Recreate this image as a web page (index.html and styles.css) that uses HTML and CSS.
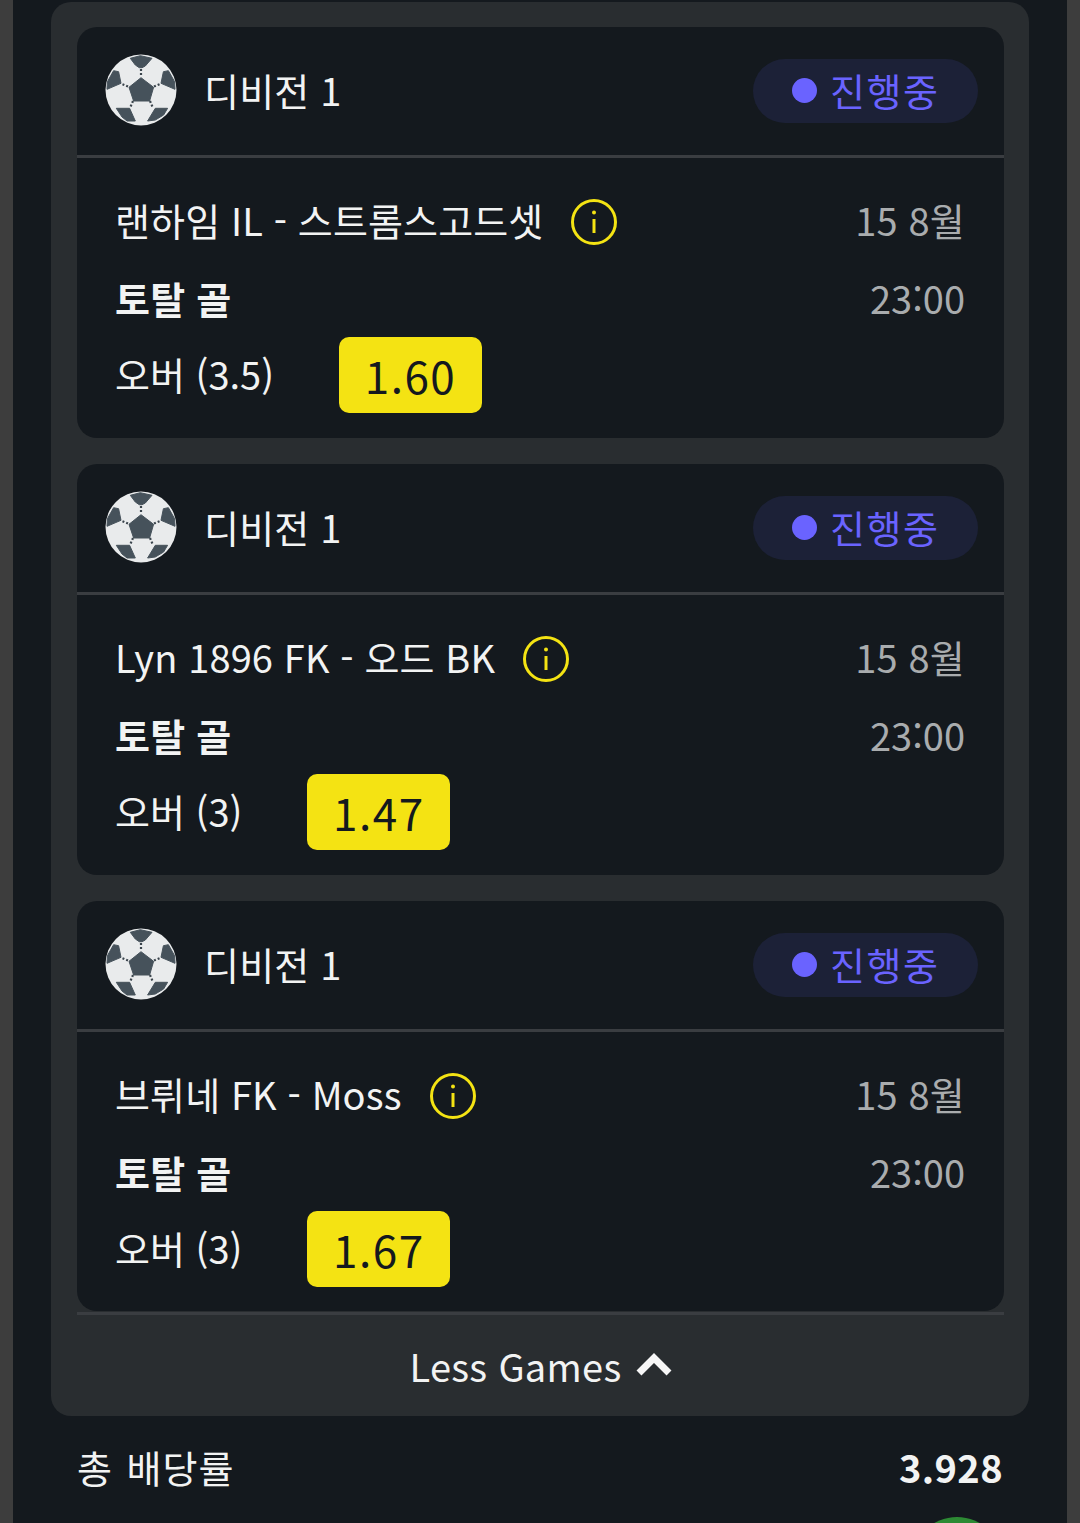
FILE: index.html
```html
<!DOCTYPE html>
<html lang="ko">
<head>
<meta charset="utf-8">
<title>Bets</title>
<link rel="stylesheet" href="styles.css">
</head>
<body>
<svg class="defs" width="0" height="0" aria-hidden="true">
  <defs>
    <symbol id="ball" viewBox="0 0 72 72">
      <circle cx="36" cy="36" r="35.5" fill="#e9ebec"/>
      <g fill="#46525b" stroke="#46525b" stroke-width="1" stroke-linejoin="round">
        <polygon points="36,23.7 48.6,33.3 44.6,47 28.6,47 24,33.3"/>
        <polygon points="25.3,4.3 35.3,1.7 47,4.3 40.3,12 37,13.7 34.3,13.7 30.3,11"/>
        <polygon points="8.6,16.7 13.6,17.7 16,29.3 2,35.3 2.4,27.7"/>
        <polygon points="63.4,16.7 58.4,17.7 56,29.3 70,35.3 69.6,27.7"/>
        <polygon points="11.3,54.3 24.6,54.3 30.3,67 22,67 17,63"/>
        <polygon points="50.3,54.3 62.6,54.3 58.6,61 50.3,66 42.6,67"/>
      </g>
      <g stroke="#3a444c" stroke-width="2.2" stroke-dasharray="2 2" fill="none">
        <line x1="36" y1="15" x2="36" y2="23"/>
        <line x1="23" y1="32.5" x2="16" y2="29.5"/>
        <line x1="49" y1="32.5" x2="56" y2="29.5"/>
        <line x1="28" y1="47" x2="25" y2="54"/>
        <line x1="45" y1="47" x2="48" y2="54"/>
      </g>
    </symbol>
  </defs>
</svg>
<main class="page">
  <section class="panel">
    <article class="card">
      <header class="card-head">
        <div class="league">
          <svg class="ball"><use href="#ball"/></svg>
          <span class="league-name">디비전 1</span>
        </div>
        <div class="status"><i class="dot"></i><span>진행중</span></div>
      </header>
      <div class="card-body">
        <div class="line">
          <div class="match"><span>랜하임 IL - 스트롬스고드셋</span>
            <svg class="info" viewBox="0 0 46 46"><circle cx="23" cy="23" r="21.5"/><line x1="23" y1="20" x2="23" y2="34"/><circle class="info-dot" cx="23" cy="13.5" r="2"/></svg>
          </div>
          <span class="date">15 8월</span>
        </div>
        <div class="line">
          <strong class="market">토탈 골</strong>
          <span class="time">23:00</span>
        </div>
        <div class="pick"><span class="pick-name">오버 (3.5)</span><span class="odds">1.60</span></div>
      </div>
    </article>
    <article class="card">
      <header class="card-head">
        <div class="league">
          <svg class="ball"><use href="#ball"/></svg>
          <span class="league-name">디비전 1</span>
        </div>
        <div class="status"><i class="dot"></i><span>진행중</span></div>
      </header>
      <div class="card-body">
        <div class="line">
          <div class="match"><span>Lyn 1896 FK - 오드 BK</span>
            <svg class="info" viewBox="0 0 46 46"><circle cx="23" cy="23" r="21.5"/><line x1="23" y1="20" x2="23" y2="34"/><circle class="info-dot" cx="23" cy="13.5" r="2"/></svg>
          </div>
          <span class="date">15 8월</span>
        </div>
        <div class="line">
          <strong class="market">토탈 골</strong>
          <span class="time">23:00</span>
        </div>
        <div class="pick"><span class="pick-name">오버 (3)</span><span class="odds">1.47</span></div>
      </div>
    </article>
    <article class="card">
      <header class="card-head">
        <div class="league">
          <svg class="ball"><use href="#ball"/></svg>
          <span class="league-name">디비전 1</span>
        </div>
        <div class="status"><i class="dot"></i><span>진행중</span></div>
      </header>
      <div class="card-body">
        <div class="line">
          <div class="match"><span>브뤼네 FK - Moss</span>
            <svg class="info" viewBox="0 0 46 46"><circle cx="23" cy="23" r="21.5"/><line x1="23" y1="20" x2="23" y2="34"/><circle class="info-dot" cx="23" cy="13.5" r="2"/></svg>
          </div>
          <span class="date">15 8월</span>
        </div>
        <div class="line">
          <strong class="market">토탈 골</strong>
          <span class="time">23:00</span>
        </div>
        <div class="pick"><span class="pick-name">오버 (3)</span><span class="odds">1.67</span></div>
      </div>
    </article>
    <div class="less">
      <span>Less Games</span>
      <svg class="chevron" viewBox="0 0 36 24"><polyline points="3,20 18,5 33,20"/></svg>
    </div>
  </section>
  <div class="total">
    <span class="total-label">총 배당률</span>
    <strong class="total-value">3.928</strong>
  </div>
  <div class="fab-row"><div class="fab"></div></div>
</main>
</body>
</html>
```
FILE: styles.css
```css
* { box-sizing: border-box; }
html, body { margin: 0; height: 100%; }
body {
  background: #3d3d3d;
  height: 1523px;
  overflow: hidden;
  padding: 0 13px;
  font-family: "Noto Sans CJK KR", "Noto Sans", sans-serif;
  color: #f2f3f3;
}
.defs { position: absolute; }
.page {
  background: #14191e;
  height: 1523px;
  padding: 2px 38px 0;
  overflow: hidden;
}
.panel {
  background: #292d30;
  border-radius: 20px;
  padding: 25px 25px 0 26px;
  height: 1414px;
}
.card {
  background: #14191e;
  border-radius: 20px;
  height: 411px;
  margin-bottom: 26px;
}
.card:nth-of-type(3) {
  margin-bottom: 0;
  height: 410px;
}
.card-head {
  height: 131px;
  border-bottom: 3px solid #3a3d41;
  display: flex;
  align-items: center;
  justify-content: space-between;
  padding: 0 26px 3px 28px;
}
.league { display: flex; align-items: center; gap: 27px; }
.ball { width: 72px; height: 72px; display: block; }
.league-name { font-size: 38px; line-height: 1; letter-spacing: 0.2px; }
.status {
  width: 225px;
  height: 64px;
  margin-top: 2px;
  padding: 0 0 2px 39px;
  border-radius: 32px;
  background: #1c2137;
  color: #6a63ff;
  display: flex;
  align-items: center;
  gap: 13px;
  font-size: 38px;
  letter-spacing: 1.5px;
}
.dot { width: 25px; height: 25px; border-radius: 50%; background: #6a63ff; display: block; margin-top: 2px; }
.card-body { padding: 22px 38px 0; }
.line {
  display: flex;
  justify-content: space-between;
  align-items: center;
  height: 78px;
  font-size: 38px;
}
.date { margin-right: 1px; letter-spacing: 0.2px; }
.time { margin-right: 1px; }
.match { display: flex; align-items: center; gap: 28px; letter-spacing: 0.12px; }
.info { width: 46px; height: 46px; margin-top: 6px; fill: none; stroke: #f4e313; stroke-width: 3; }
.info-dot { fill: #f4e313; stroke: none; }
.date, .time { color: #a9acae; }
.market { font-weight: 700; letter-spacing: 0.2px; }
.pick { display: flex; align-items: center; gap: 65px; font-size: 38px; margin-top: 1px; }
.pick-name { margin-bottom: 4px; }
.odds {
  width: 143px;
  height: 76px;
  border-radius: 10px;
  background: #f4e313;
  color: #14191e;
  font-size: 44px;
  letter-spacing: 1.5px;
  display: flex;
  align-items: center;
  justify-content: center;
}
.less {
  margin-top: 1px;
  height: 103px;
  border-top: 3px solid #3a3d41;
  display: flex;
  align-items: center;
  justify-content: center;
  gap: 14px;
  font-size: 38px;
  letter-spacing: 0.3px;
}
.chevron { width: 36px; height: 24px; fill: none; stroke: #f7f7f7; stroke-width: 7; }
.total {
  display: flex;
  justify-content: space-between;
  align-items: center;
  height: 100px;
  padding: 0 26px;
  font-size: 38px;
}
.total-label { letter-spacing: 1px; word-spacing: 2px; }
.total-value { font-weight: 700; letter-spacing: 0.4px; }
.fab-row { display: flex; justify-content: flex-end; padding-right: 26px; }
.fab { width: 92px; height: 92px; border-radius: 50%; background: #2d8a34; margin-top: 1px; }
```
